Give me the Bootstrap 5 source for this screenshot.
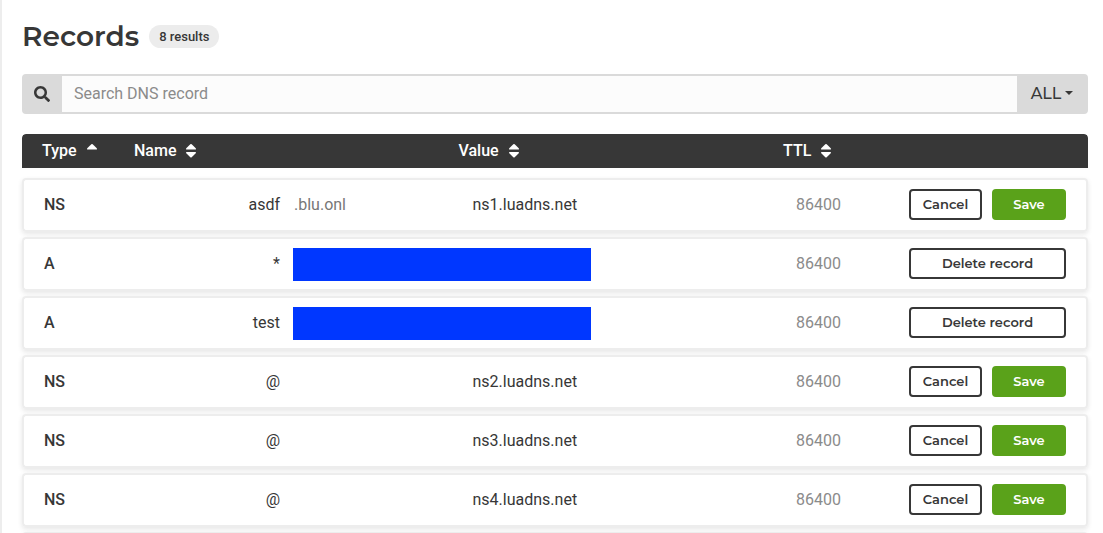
<!DOCTYPE html>
<html lang="en">
<head>
<meta charset="utf-8">
<meta name="viewport" content="width=device-width, initial-scale=1">
<title>DNS records</title>
<link rel="stylesheet" href="https://cdn.jsdelivr.net/npm/bootstrap@5.3.0/dist/css/bootstrap.min.css">
<style>
  body { font-family: Roboto, sans-serif; font-size: 16px; line-height: 24px; color: #373737; background: #fff; }
  .records-panel { height: 100vh; overflow: hidden; border-left: 2px solid #ededed; padding: 16px 15px 0 20px; }
  .records-header { gap: 10px; }
  .records-title { font: 600 28px/40px Montserrat, Inter, sans-serif; }
  .result-count { font-size: 13px; line-height: 15px; font-weight: 500; color: #373737; background: #ececec; padding: 4px 10px; }
  .search-bar { margin: 18px 0 20px; height: 40px; border: 2px solid #dadada; border-radius: 4px; background: #dadada; }
  .search-bar .input-group-text { width: 39px; padding: 0 3px 0 0; border: 0; background: #dadada; color: #373737; }
  .search-bar .form-control, .search-bar .form-control:focus { border: 0; border-radius: 0; background: #fcfcfc; padding: 0 12px; box-shadow: none; }
  .search-bar .form-control::placeholder { color: #8b8b8b; }
  .filter-toggle { width: 70px; padding: 0 0 0 2px; border: 0; font: 500 16px/24px Montserrat, Inter, sans-serif; color: #373737; }
  .filter-toggle::after { margin-left: 4px; vertical-align: 4px; border-width: 4px; border-bottom: 0; }
  .records-table { width: 100%; table-layout: fixed; border-collapse: separate; border-spacing: 0 5px; margin-top: -5px; }
  .col-type { width: 92px; }
  .col-ttl { width: 126px; }
  .col-actions { width: 199px; }
  .records-table th[scope=col] { height: 39px; padding: 0 20px; font-weight: 500; color: #fff; background: #373737; background-clip: padding-box; border-bottom: 5px solid transparent; }
  .records-table th[scope=col]:first-child { border-top-left-radius: 4px; }
  .records-table th[scope=col]:last-child { border-top-right-radius: 4px; }
  .sort-link { color: #fff; gap: 10px; }
  .sort-link svg { flex: none; }
  .records-table tbody tr { border-radius: 4px; box-shadow: 0 2px 5px rgba(0, 0, 0, .1); }
  .records-table tbody th, .records-table tbody td { height: 54px; padding: 0; background: #fff; border: solid #ededed; border-width: 2px 0; }
  .records-table tbody th { padding-left: 20px; font-weight: 500; border-left-width: 2px; border-radius: 4px 0 0 4px; }
  .records-table tbody td:last-child { padding: 0 20px 2px; border-right-width: 2px; border-radius: 0 4px 4px 0; }
  .record-name { flex: 0 0 166px; text-align: right; }
  .zone-suffix { margin-left: 14px; color: #777; }
  .redacted { width: 298px; height: 33px; margin-left: 13px; background: #0037ff; }
  .records-table .record-value { padding-left: 34px; }
  .records-table .record-ttl { padding-left: 33px; color: #8b8b8b; }
  .record-actions { gap: 10px; }
  .btn-record { height: 31px; padding: 0; border: 2px solid #373737; border-radius: 4px; font: 600 13px/20px Montserrat, Inter, sans-serif; color: #373737; background: #fff; }
  .btn-cancel { flex: 0 0 73px; }
  .btn-save { color: #fff; background: #5aa21a; border-color: #5aa21a; }
</style>
</head>
<body>
<main class="records-panel">
  <header class="records-header d-flex align-items-center">
    <h1 class="records-title m-0">Records</h1>
    <span class="result-count rounded-pill">8 results</span>
  </header>

  <form class="search-bar input-group flex-nowrap" role="search">
    <label class="input-group-text justify-content-center" for="record-search" aria-label="Search">
      <svg width="16" height="16" viewBox="0 0 512 512" fill="currentColor" aria-hidden="true"><path d="M505 442.700 405.300 343c-4.500-4.500-10.600-7-17-7H372c27.600-35.300 44-79.700 44-128C416 93.100 322.900 0 208 0S0 93.100 0 208s93.100 208 208 208c48.300 0 92.700-16.400 128-44v16.300c0 6.400 2.500 12.500 7 17l99.700 99.700c9.400 9.400 24.600 9.400 33.900 0l28.300-28.300c9.400-9.400 9.400-24.600.1-34zM208 336c-70.700 0-128-57.200-128-128 0-70.700 57.200-128 128-128 70.700 0 128 57.200 128 128 0 70.700-57.200 128-128 128z"/></svg>
    </label>
    <input class="form-control" id="record-search" type="search" placeholder="Search DNS record">
    <button class="filter-toggle btn dropdown-toggle" type="button" data-bs-toggle="dropdown">ALL</button>
  </form>

  <table class="records-table">
    <colgroup><col class="col-type"><col><col><col class="col-ttl"><col class="col-actions"></colgroup>
    <thead>
      <tr>
        <th scope="col"><a class="sort-link d-flex align-items-center text-decoration-none" href="#">Type
          <svg width="10" height="14" viewBox="0 0 10 14" fill="currentColor" aria-hidden="true"><path d="M0 5Q0 4.500.500 4L4.300.300Q5-.300 5.700.300L9.500 4Q10 4.500 10 5Q10 5.500 9.300 5.500H.700Q0 5.500 0 5z"/></svg></a></th>
        <th scope="col"><a class="sort-link d-flex align-items-center text-decoration-none" href="#">Name
          <svg width="10" height="14" viewBox="0 0 10 14" fill="currentColor" aria-hidden="true"><path id="both-ways" d="M0 5Q0 4.500.500 4L4.300.300Q5-.300 5.700.300L9.500 4Q10 4.500 10 5Q10 5.500 9.300 5.500H.700Q0 5.500 0 5zM0 8.500Q0 9 .500 9.500L4.300 13.200Q5 13.800 5.700 13.200L9.500 9.500Q10 9 10 8.500Q10 8 9.300 8H.700Q0 8 0 8.500z"/></svg></a></th>
        <th scope="col"><a class="sort-link d-flex align-items-center text-decoration-none" href="#">Value
          <svg width="10" height="14" fill="currentColor" aria-hidden="true"><use href="#both-ways"/></svg></a></th>
        <th scope="col"><a class="sort-link d-flex align-items-center text-decoration-none" href="#">TTL
          <svg width="10" height="14" fill="currentColor" aria-hidden="true"><use href="#both-ways"/></svg></a></th>
        <th scope="col"></th>
      </tr>
    </thead>
    <tbody>
      <tr>
        <th scope="row">NS</th>
        <td><div class="d-flex"><span class="record-name">asdf</span><span class="zone-suffix">.blu.onl</span></div></td>
        <td class="record-value">ns1.luadns.net</td>
        <td class="record-ttl">86400</td>
        <td><div class="record-actions d-flex"><button class="btn-record btn-cancel" type="button">Cancel</button><button class="btn-record btn-save flex-fill" type="button">Save</button></div></td>
      </tr>
      <tr>
        <th scope="row">A</th>
        <td colspan="2"><div class="d-flex align-items-center"><span class="record-name">*</span><span class="redacted"></span></div></td>
        <td class="record-ttl">86400</td>
        <td><div class="record-actions d-flex"><button class="btn-record w-100" type="button">Delete record</button></div></td>
      </tr>
      <tr>
        <th scope="row">A</th>
        <td colspan="2"><div class="d-flex align-items-center"><span class="record-name">test</span><span class="redacted"></span></div></td>
        <td class="record-ttl">86400</td>
        <td><div class="record-actions d-flex"><button class="btn-record w-100" type="button">Delete record</button></div></td>
      </tr>
      <tr>
        <th scope="row">NS</th>
        <td><div class="d-flex"><span class="record-name">@</span></div></td>
        <td class="record-value">ns2.luadns.net</td>
        <td class="record-ttl">86400</td>
        <td><div class="record-actions d-flex"><button class="btn-record btn-cancel" type="button">Cancel</button><button class="btn-record btn-save flex-fill" type="button">Save</button></div></td>
      </tr>
      <tr>
        <th scope="row">NS</th>
        <td><div class="d-flex"><span class="record-name">@</span></div></td>
        <td class="record-value">ns3.luadns.net</td>
        <td class="record-ttl">86400</td>
        <td><div class="record-actions d-flex"><button class="btn-record btn-cancel" type="button">Cancel</button><button class="btn-record btn-save flex-fill" type="button">Save</button></div></td>
      </tr>
      <tr>
        <th scope="row">NS</th>
        <td><div class="d-flex"><span class="record-name">@</span></div></td>
        <td class="record-value">ns4.luadns.net</td>
        <td class="record-ttl">86400</td>
        <td><div class="record-actions d-flex"><button class="btn-record btn-cancel" type="button">Cancel</button><button class="btn-record btn-save flex-fill" type="button">Save</button></div></td>
      </tr>
      <tr><th scope="row"></th><td></td><td></td><td></td><td></td></tr>
    </tbody>
  </table>
</main>
<script src="https://cdn.jsdelivr.net/npm/bootstrap@5.3.0/dist/js/bootstrap.bundle.min.js"></script>
</body>
</html>
